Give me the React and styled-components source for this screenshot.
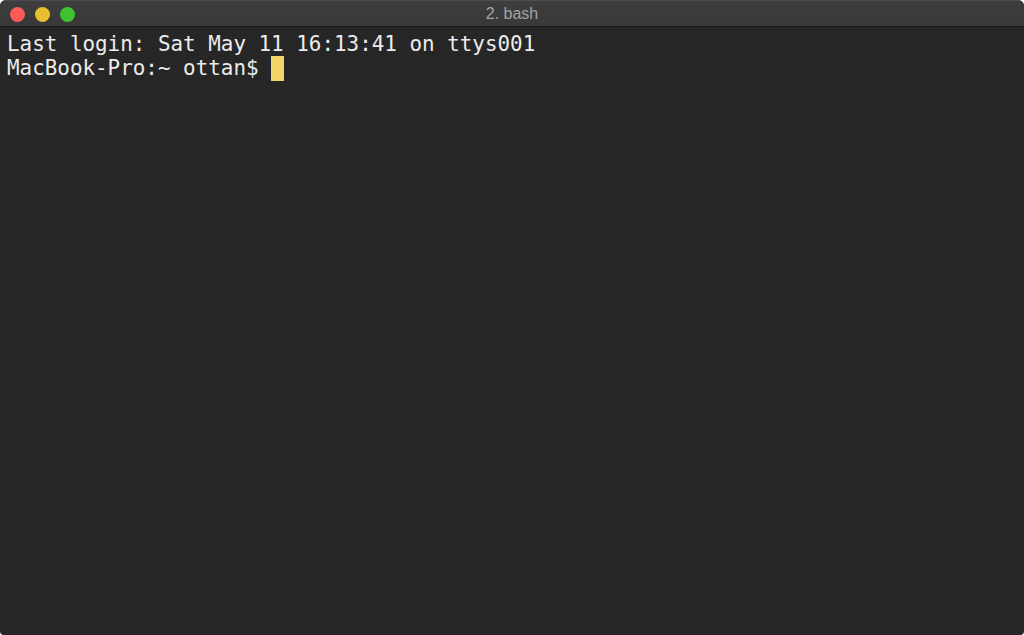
import React from "react";
import styled, { createGlobalStyle } from "styled-components";

const Global = createGlobalStyle`
  html, body { margin: 0; padding: 0; background: #ffffff; }
  body { overflow: hidden; }
`;

const Window = styled.div`
  width: 1024px;
  height: 635px;
  display: flex;
  flex-direction: column;
  border-radius: 6px 6px 4px 4px;
  overflow: hidden;
  background: #262626;
`;

const TitleBar = styled.div`
  height: 27px;
  flex: 0 0 27px;
  position: relative;
  display: flex;
  align-items: center;
  justify-content: center;
  background: linear-gradient(#3e3e3e, #383838);
  border-top: 1px solid #4c4c4c;
  border-bottom: 1px solid #1c1c1c;
  box-sizing: border-box;
`;

const Lights = styled.div`
  position: absolute;
  left: 10px;
  top: 6px;
  display: flex;
  gap: 10px;
`;

const Light = styled.span`
  width: 15px;
  height: 15px;
  border-radius: 50%;
  background: ${(p) => p.$color};
`;

const Title = styled.div`
  font-family: "Liberation Sans", Arial, sans-serif;
  font-size: 16px;
  color: #a3a3a3;
`;

const Screen = styled.div`
  flex: 1;
  padding: 5px 7px;
  font-family: "DejaVu Sans Mono", monospace;
  font-size: 20.9px;
  line-height: 24px;
  color: #ececec;
  white-space: pre;
`;

const Line = styled.div``;

const Cursor = styled.span`
  display: inline-block;
  width: 13px;
  height: 25px;
  background: #f3d466;
  vertical-align: top;
`;

export default function App() {
  return (
    <>
      <Global />
      <Window>
        <TitleBar>
          <Lights>
            <Light $color="#fb5b57" />
            <Light $color="#e9bf2d" />
            <Light $color="#40c231" />
          </Lights>
          <Title>2. bash</Title>
        </TitleBar>
        <Screen>
          <Line>Last login: Sat May 11 16:13:41 on ttys001</Line>
          <Line>
            MacBook-Pro:~ ottan$ <Cursor />
          </Line>
        </Screen>
      </Window>
    </>
  );
}
